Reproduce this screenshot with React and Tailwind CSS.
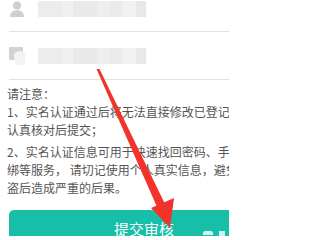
const blocks = ["#ececec", "#f0f0f0", "#e9e9e9", "#eeeeee", "#eaeaea", "#f1f1f1", "#e8e8e8"];

const Mosaic = () => (
  <div className="flex h-[16px] w-[108px]">
    {[24, 11, 24, 13, 12, 14, 10].map((w, i) => (
      <div key={i} className="h-full" style={{ width: w, background: blocks[i] }} />
    ))}
  </div>
);

const PersonIcon = () => (
  <svg width="16" height="16" viewBox="0 0 16 16">
    <circle cx="8" cy="4.5" r="4" fill="#cfcfcf" />
    <path d="M1 16 C1 11 4.5 9.3 8 9.3 C11.5 9.3 15 11 15 16 Z" fill="#cfcfcf" />
  </svg>
);

const CardIcon = () => (
  <svg width="16" height="19" viewBox="0 0 16 19">
    <rect x="0" y="1" width="14" height="13" rx="1" fill="#d2d2d2" />
    <path d="M6 6.5 C9 4 15 4.5 16 7.5 L16 19 L8 19 C5 15 4 10 6 6.5 Z" fill="#f3f3f3" />
  </svg>
);

const App = () => {
  return (
    <div
      className="relative h-[236px] w-[229px] overflow-hidden bg-white"
      style={{ fontFamily: '"Noto Sans CJK SC", "Noto Sans", sans-serif' }}
    >
      <div className="w-[300px]">
        <div className="ml-[9px] flex h-[32px] items-start border-b border-[#e2e2e2]">
          <div className="flex h-[17px] items-center gap-[13px]">
            <PersonIcon />
            <Mosaic />
          </div>
        </div>

        <div className="ml-[9px] flex h-[48px] items-center gap-[13px] border-b border-[#e2e2e2]">
          <CardIcon />
          <Mosaic />
        </div>

        <div className="whitespace-nowrap px-[7px] pt-[5px] text-[12px] leading-[18px] text-[#555]">
          <p>请注意：</p>
          <p>1、实名认证通过后将无法直接修改已登记信息，请</p>
          <p>认真核对后提交；</p>
          <p className="mt-[4px]">2、实名认证信息可用于快速找回密码、手机解</p>
          <p>绑等服务， 请切记使用个人真实信息，避免被</p>
          <p>盗后造成严重的后果。</p>
        </div>

        <button className="ml-[9px] mt-[13px] h-[44px] w-[270px] rounded-[5px] bg-[#17bfa9] pb-[6px] text-[15px] leading-[20px] text-white">
          提交审核
        </button>
      </div>

      <div className="absolute bottom-0 right-[4px] flex gap-[6px]">
        <div className="h-[4px] w-[10px] rounded-t-[2px] bg-white/80" />
        <div className="h-[5px] w-[6px] bg-white/80" />
      </div>

      <svg className="pointer-events-none absolute left-0 top-0" width="229" height="236">
        <polygon points="96.5,69 99.5,69 165,204 157,207" fill="#f2332b" />
        <polygon points="151,208 174,198 170,228" fill="#f2332b" />
      </svg>
    </div>
  );
};

export default App;
